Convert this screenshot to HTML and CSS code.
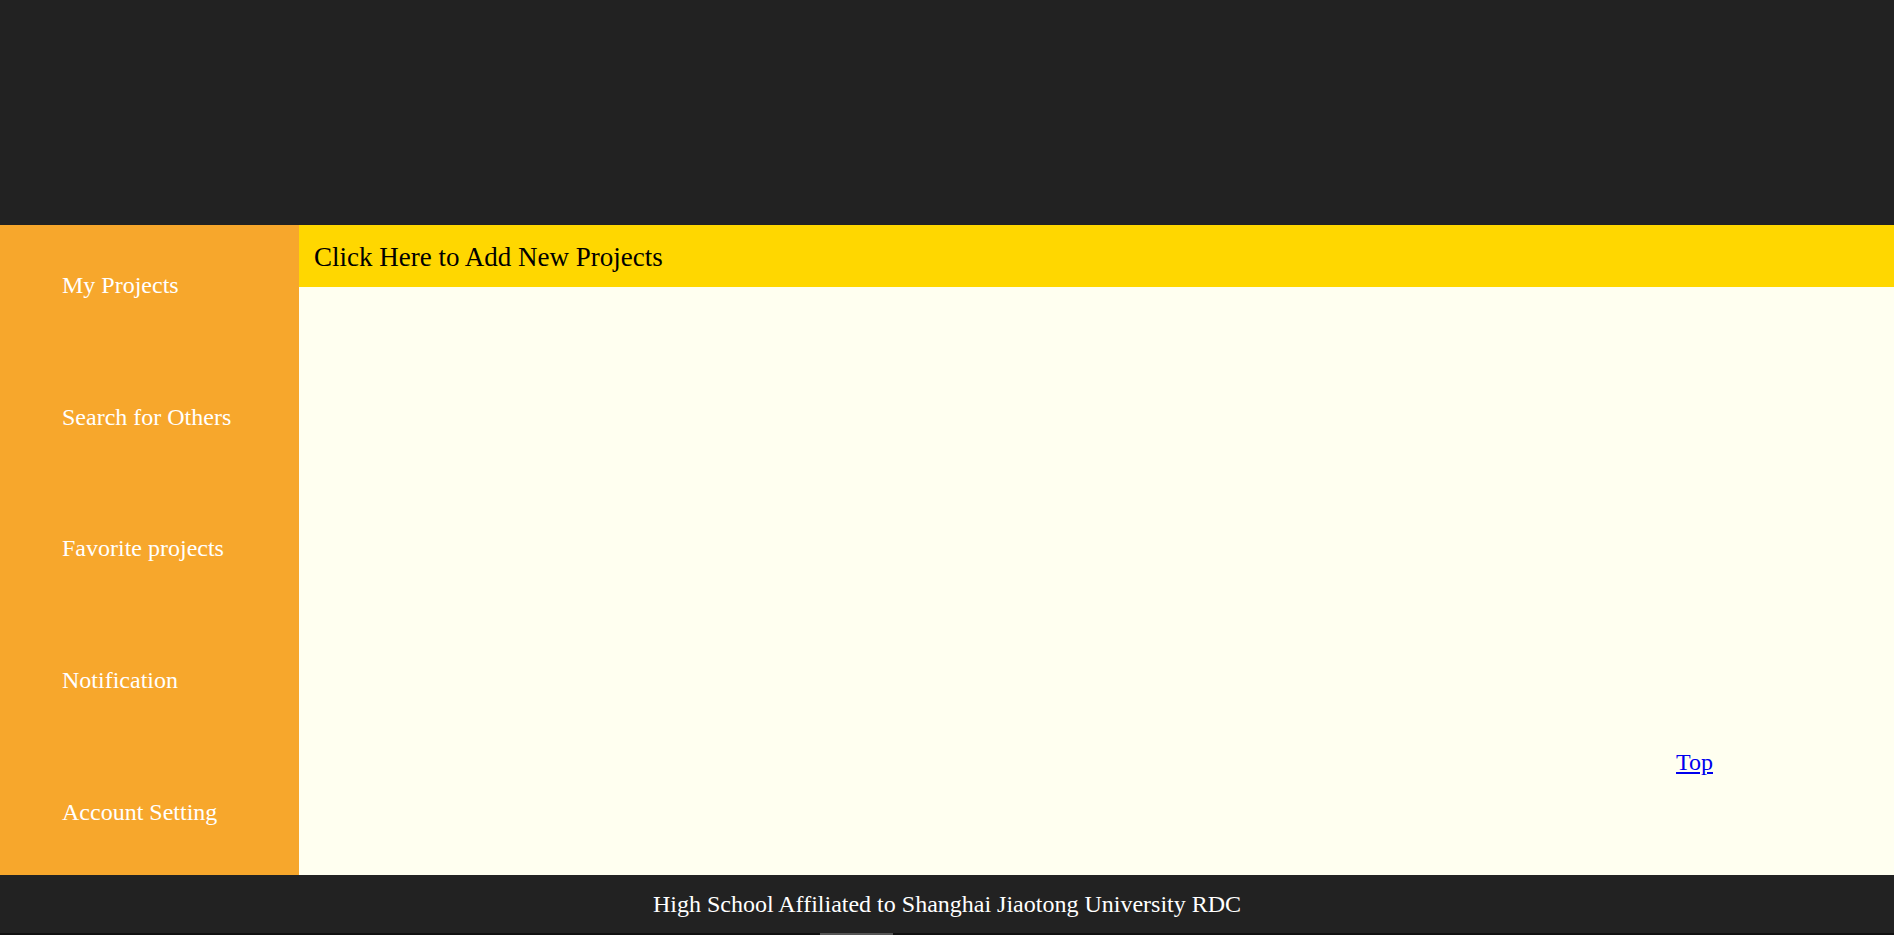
FILE: index.html
```html
<!DOCTYPE html>
<html lang="en">
<head>
<meta charset="utf-8">
<title>My Projects</title>
<link rel="stylesheet" href="styles.css">
</head>
<body>
<header class="topbar"></header>
<div class="main">
  <nav class="sidebar">
    <a class="side-item" href="#">My Projects</a>
    <a class="side-item" href="#">Search for Others</a>
    <a class="side-item" href="#">Favorite projects</a>
    <a class="side-item" href="#">Notification</a>
    <a class="side-item" href="#">Account Setting</a>
  </nav>
  <section class="content">
    <div class="add-bar">Click Here to Add New Projects</div>
    <div class="content-body">
      <a class="top-link" href="#">Top</a>
    </div>
  </section>
</div>
<footer class="footer">High School Affiliated to Shanghai Jiaotong University RDC</footer>
<div class="hscroll"><div class="hthumb"></div></div>
</body>
</html>
```
FILE: styles.css
```css
html, body {
  margin: 0;
  padding: 0;
}
body {
  width: 1894px;
  height: 935px;
  overflow: hidden;
  font-family: "Liberation Serif", "Times New Roman", serif;
  background: #fffff0;
}
.topbar {
  height: 225px;
  background: #222222;
}
.main {
  display: flex;
  height: 650px;
}
.sidebar {
  width: 299px;
  flex: none;
  background: #f7a72c;
  display: flex;
  flex-direction: column;
  overflow: hidden;
}
.side-item {
  display: block;
  flex: none;
  height: 131.7px;
  box-sizing: border-box;
  padding: 46px 0 0 62px;
  font-size: 24px;
  line-height: 28px;
  color: #ffffff;
  text-decoration: none;
}
.content {
  flex: 1;
  display: flex;
  flex-direction: column;
  background: #fffff0;
}
.add-bar {
  height: 62px;
  box-sizing: border-box;
  background: #ffd700;
  font-size: 27px;
  padding: 2px 0 0 15px;
  line-height: 60px;
  color: #000000;
}
.content-body {
  flex: 1;
  display: flex;
  flex-direction: column;
  justify-content: flex-end;
  align-items: flex-end;
  padding: 0 181px 99px 0;
}
.top-link {
  font-size: 24px;
  line-height: 28px;
  color: #0000ee;
}
.footer {
  height: 58px;
  box-sizing: border-box;
  padding-top: 2px;
  background: #222222;
  color: #ffffff;
  font-size: 24px;
  line-height: 55px;
  text-align: center;
}
.hscroll {
  height: 2px;
  background: #111111;
  display: flex;
}
.hthumb {
  margin-left: 820px;
  width: 73px;
  background: #555555;
}
```
